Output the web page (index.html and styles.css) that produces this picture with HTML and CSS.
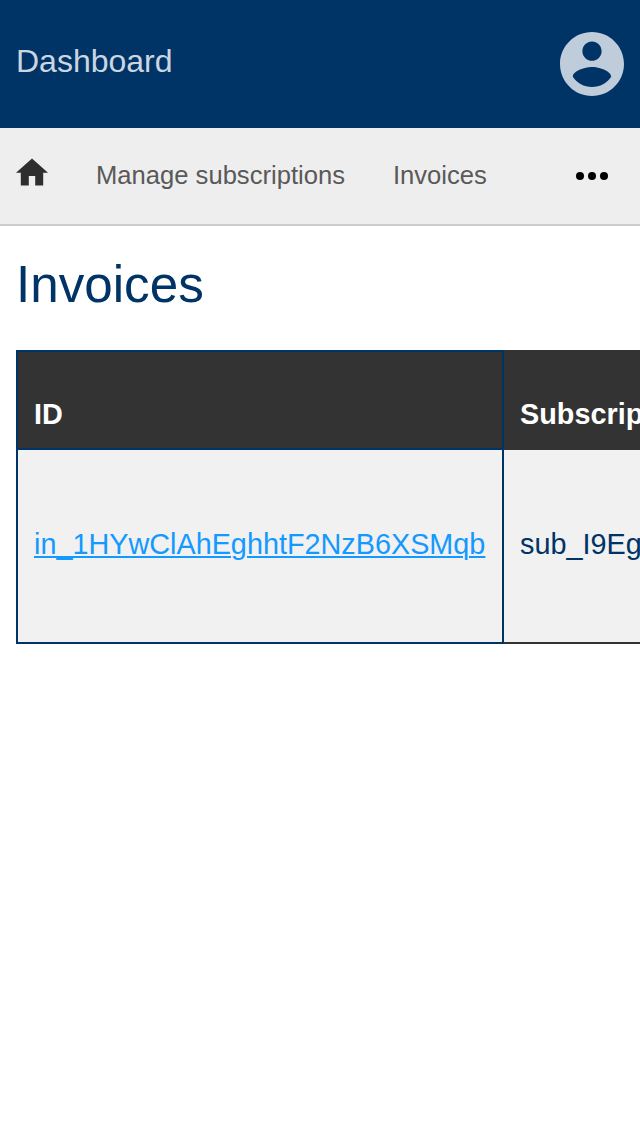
FILE: index.html
```html
<!DOCTYPE html>
<html lang="en">
<head>
<meta charset="utf-8">
<title>Invoices</title>
<link rel="stylesheet" href="styles.css">
</head>
<body>
<header class="header">
  <span class="brand">Dashboard</span>
  <svg class="account" viewBox="2 2 20 20"><path d="M12 2C6.480 2 2 6.480 2 12s4.480 10 10 10 10-4.480 10-10S17.520 2 12 2zm0 3c1.660 0 3 1.340 3 3s-1.340 3-3 3-3-1.340-3-3 1.340-3 3-3zm0 14.200c-2.500 0-4.710-1.280-6-3.220.030-1.990 4-3.080 6-3.080 1.990 0 5.970 1.090 6 3.080-1.290 1.940-3.500 3.220-6 3.220z"/></svg>
</header>
<nav class="nav">
  <svg class="home" viewBox="2 3 20 17"><path d="M10 20v-6h4v6h5v-8h3L12 3 2 12h3v8z"/></svg>
  <a class="nav-link">Manage subscriptions</a>
  <a class="nav-link">Invoices</a>
  <svg class="more" viewBox="0 0 32 8"><circle cx="4" cy="4" r="4"/><circle cx="16" cy="4" r="4"/><circle cx="28" cy="4" r="4"/></svg>
</nav>
<main class="main">
  <h1 class="title">Invoices</h1>
  <div class="table">
    <div class="cell head id">ID</div>
    <div class="cell head sub">Subscription</div>
    <div class="cell body id"><a class="link">in_1HYwClAhEghhtF2NzB6XSMqb</a></div>
    <div class="cell body sub">sub_I9Eg</div>
  </div>
</main>
</body>
</html>
```
FILE: styles.css
```css
* { box-sizing: border-box; }
body { margin: 0; background: #fff; color: #036; font-family: "Liberation Sans", Arial, sans-serif; }
.header { display: flex; align-items: center; justify-content: space-between; height: 128px; padding: 0 16px; background: #003366; }
.brand { padding-bottom: 6px; font-size: 32px; line-height: 40px; color: #ccd6e0; }
.account { width: 64px; height: 64px; fill: #bfccd9; }
.nav { display: flex; align-items: center; height: 98px; padding: 0 32px 0 16px; background: #eee; border-bottom: 2px solid #ccc; }
.home { width: 32px; height: 28px; margin-bottom: 8px; fill: #2e2e2e; }
.nav-link { margin-left: 48px; padding-bottom: 2px; font-size: 25.6px; line-height: 32px; color: #595959; }
.more { width: 32px; height: 8px; margin-left: auto; fill: #000; }
.main { padding: 27px 0 0 16px; overflow: hidden; }
.title { margin: 0 0 33px; font-size: 51.2px; line-height: 64px; font-weight: 400; }
.table { display: grid; grid-template-columns: 488px 1fr; grid-template-rows: 100px 194px; }
.cell { display: flex; align-items: center; min-width: 0; padding: 0 16px; font-size: 28.8px; line-height: 36px; white-space: nowrap; }
.head { padding-top: 28px; background: #333; color: #fff; font-weight: 700; }
.body { padding-bottom: 4px; background: #f1f1f1; border-bottom: 2px solid #333; }
.id { border: 2px solid #036; }
.body.id { border-top: 0; }
.link { color: #1499ff; text-decoration: underline; text-decoration-thickness: 2px; text-underline-offset: 2px; }
```
